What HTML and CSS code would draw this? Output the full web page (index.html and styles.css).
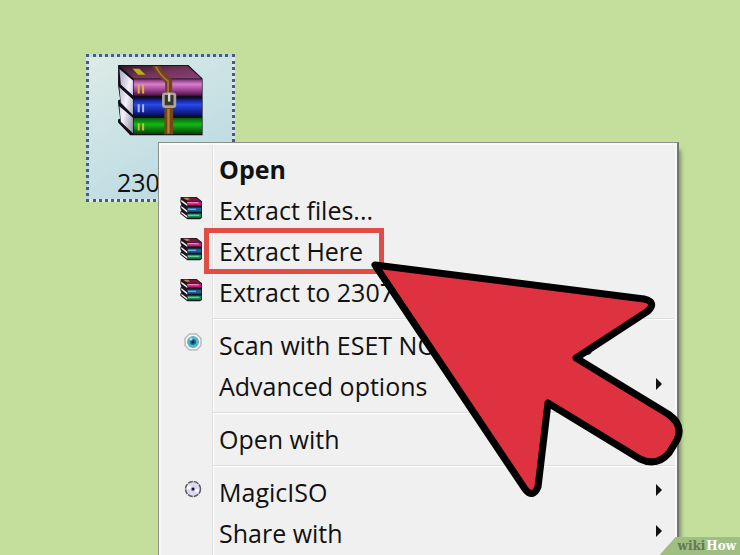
FILE: index.html
```html
<!DOCTYPE html>
<html lang="en">
<head>
<meta charset="utf-8">
<title>Extract Here</title>
<link rel="stylesheet" href="styles.css">
</head>
<body>
<svg class="defs" aria-hidden="true">
  <defs>
    <linearGradient id="plum" x1="0" y1="0" x2="0" y2="1"><stop offset="0" stop-color="#7a2c6e"/><stop offset=".3" stop-color="#d77fce"/><stop offset=".6" stop-color="#a84a9c"/><stop offset="1" stop-color="#4a123f"/></linearGradient>
    <linearGradient id="cover" x1="0" y1="0" x2="1" y2="1"><stop offset="0" stop-color="#2f1528"/><stop offset=".5" stop-color="#713459"/><stop offset="1" stop-color="#8b3f7a"/></linearGradient>
    <linearGradient id="blue" x1="0" y1="0" x2="0" y2="1"><stop offset="0" stop-color="#0a1378"/><stop offset=".35" stop-color="#2848ea"/><stop offset="1" stop-color="#060c62"/></linearGradient>
    <linearGradient id="green" x1="0" y1="0" x2="0" y2="1"><stop offset="0" stop-color="#05620a"/><stop offset=".4" stop-color="#15b51a"/><stop offset="1" stop-color="#024305"/></linearGradient>
    <linearGradient id="pages" x1="0" y1="0" x2="1" y2="1"><stop offset="0" stop-color="#a8a4bd"/><stop offset=".5" stop-color="#f3f1fa"/><stop offset="1" stop-color="#8f8ba6"/></linearGradient>
    <symbol id="books" viewBox="0 0 66 72">
      <path d="M2 3H50L66 16V66L60 70H22L1 53V47L4 44 1 36V30L4 26 1 18Z" fill="#1b141b"/>
      <path d="M4 11 22 25V30L4 17ZM4 30 22 44V50L4 35ZM4 47 22 60V66L4 52Z" fill="#f1f1f6"/>
      <path d="M6 5H48L62 15H23Z" fill="#74163f"/>
      <path d="M10 5H24L30 10 20 12Z" fill="#c98535"/>
      <path d="M22 17H64V28H22Z" fill="#c01c78"/>
      <path d="M22 20H56" stroke="#ec86ba" stroke-width="4"/>
      <path d="M22 35H64V47H22Z" fill="#17609d"/>
      <path d="M24 40H48" stroke="#65b7e3" stroke-width="4"/>
      <path d="M22 53H64V65H22Z" fill="#168a58"/>
      <path d="M24 58H58" stroke="#61cf97" stroke-width="4"/>
    </symbol>
  </defs>
</svg>
<main class="desktop">
  <button class="file" type="button">
    <svg class="archive" viewBox="0 0 252 210" aria-hidden="true">
      <path d="M2 0H210L252 40V208H38L2 170V161L8 158 2 114V104L8 102 2 60Z" fill="#120d16"/>
      <path d="M6 12 46 46V90L10 58ZM6 66 46 102V148L10 112ZM6 122 46 156V202L10 168Z" fill="url(#pages)"/>
      <path d="M5 2H207L248 40H48Z" fill="url(#cover)"/>
      <path d="M48 42H250V91H48Z" fill="url(#plum)"/>
      <path d="M48 99H250V150H48Z" fill="url(#blue)"/>
      <path d="M48 157H250V204H48Z" fill="url(#green)"/>
      <path d="M45 11H65L83 29H61Z" fill="#b8ad16"/>
      <path d="M63 58V84M76 58V84M63 172V194M76 172V194" stroke="#d8b62c" stroke-width="6"/>
      <path d="M63 116V140M76 116V140" stroke="#a9b5dc" stroke-width="6"/>
      <path d="M103 3H126Q138 28 162 43V90H141V52Q118 34 103 3Z" fill="#70431f"/>
      <path d="M114 5Q126 30 150 48V86" fill="none" stroke="#a9743d" stroke-width="5"/>
      <path d="M139 126H165V205H139Z" fill="#754717"/>
      <path d="M151 130V202" stroke="#b57d35" stroke-width="7"/>
      <rect x="136" y="85" width="34" height="38" rx="5" fill="#39352f" stroke="#aaa69f" stroke-width="8"/>
      <path d="M153 84V108" stroke="#d8d4ce" stroke-width="7"/>
    </svg>
    <span class="name">2307</span>
  </button>

  <nav class="menu" aria-label="File actions">
    <button class="item default" type="button"><span class="icon"></span><span>Open</span></button>
    <button class="item" type="button"><span class="icon"><svg class="rar"><use href="#books"/></svg></span><span>Extract files...</span></button>
    <button class="item marked" type="button"><span class="icon"><svg class="rar"><use href="#books"/></svg></span><span>Extract Here</span></button>
    <button class="item" type="button"><span class="icon"><svg class="rar"><use href="#books"/></svg></span><span>Extract to 2307\</span></button>
    <hr>
    <button class="item" type="button"><span class="icon"><svg class="round" viewBox="0 0 18 18"><path d="M5.500 1H12.500L17 5.500V12.500L12.500 17H5.500L1 12.500V5.500Z" fill="#fafafa" stroke="#bdb9bb" stroke-width="1.500"/><circle cx="9" cy="9" r="6" fill="#55b5c2"/><circle cx="9" cy="9" r="3" fill="#16709a"/><circle cx="9" cy="9" r="1.500" fill="#092c50"/><circle cx="7" cy="6" r="1.500" fill="#a7dfe4"/></svg></span><span>Scan with ESET NOD32 Antivirus</span></button>
    <button class="item sub" type="button"><span class="icon"></span><span>Advanced options</span></button>
    <hr>
    <button class="item" type="button"><span class="icon"></span><span>Open with</span></button>
    <hr>
    <button class="item sub" type="button"><span class="icon"><svg class="round" viewBox="0 0 18 18"><circle cx="9" cy="9" r="7.500" fill="#dcdaf0" stroke="#5d5b66" stroke-width="1.500" stroke-dasharray="5 1"/><path d="M3 7 7 8M11 10 15 11" stroke="#fff" stroke-width="3"/><circle cx="9" cy="9" r="2.500" fill="#c5c2df"/><circle cx="9" cy="9" r="1.500" fill="#17151f"/></svg></span><span>MagicISO</span></button>
    <button class="item sub" type="button"><span class="icon"></span><span>Share with</span></button>
  </nav>

  <svg class="pointer" viewBox="370 260 314 240" aria-hidden="true">
    <path d="M375 265 644 299Q657 302 648 311L576 358 668 414Q684 425 677 440L669 453Q657 467 640 459L548 403 538 487Q533 499 525 489Z" fill="#df3240" stroke="#000" stroke-width="7" stroke-linejoin="round"/>
  </svg>
  <div class="watermark"><span>wiki</span><b>How</b></div>
</main>
</body>
</html>
```
FILE: styles.css
```css
*,
*::after {
  box-sizing: border-box;
}

body {
  margin: 0;
  background: #c4df9b;
  color: #111;
  font: 25px/41px "Open Sans", "Noto Sans", sans-serif;
}

button {
  margin: 0;
  padding: 0;
  border: 0;
  background: none;
  color: inherit;
  font: inherit;
  text-align: left;
}

.defs {
  position: absolute;
  width: 0;
  height: 0;
}

.desktop {
  position: relative;
  height: 100vh;
  overflow: hidden;
}

.file {
  position: absolute;
  left: 86px;
  top: 54px;
  display: flex;
  flex-direction: column;
  gap: 29px;
  width: 149px;
  padding: 8px 28px 0;
  border: 3px dotted #4c5c78;
  background: linear-gradient(150deg, #dcebe6, #c4dfe4 60%, #b7d8e1);
  line-height: 34px;
}

.archive {
  width: 86px;
  height: 71px;
}

.menu {
  position: absolute;
  left: 158px;
  top: 142px;
  width: 521px;
  padding: 6px 3px;
  border: 1px solid #8b918b;
  border-right: 2px solid #70786b;
  background: linear-gradient(90deg, #f0f0f0 53px, #dedede 53px, #dedede 54px, #fff 54px, #fff 55px, #f0f0f0 55px);
  box-shadow: inset 0 0 0 2px #f8f8f8, 4px 6px 4px -2px #7e9067;
}

.item {
  position: relative;
  display: flex;
  align-items: center;
  width: 100%;
  height: 41px;
  white-space: nowrap;
}

.icon {
  display: flex;
  justify-content: flex-end;
  flex: none;
  width: 57px;
  padding-right: 17px;
}

.rar {
  width: 22px;
  height: 24px;
  margin-bottom: 6px;
}

.round {
  width: 18px;
  height: 18px;
  margin-bottom: 8px;
}

.default {
  font-weight: 700;
}

.marked::after {
  content: "";
  position: absolute;
  left: 42px;
  top: -3px;
  width: 180px;
  height: 46px;
  border: 5px solid #e04d46;
}

.sub::after {
  content: "";
  margin: 0 12px 6px auto;
  border: solid transparent;
  border-width: 6px 0 6px 6px;
  border-left-color: #111;
}

hr {
  height: 2px;
  margin: 5px 0 5px 51px;
  border: 0;
  border-top: 1px solid #dedede;
  border-bottom: 1px solid #fff;
}

.pointer {
  position: absolute;
  left: 370px;
  top: 260px;
  width: 314px;
  height: 240px;
}

.watermark {
  position: absolute;
  right: 0;
  bottom: 0;
  display: flex;
  gap: 1px;
  padding: 0 4px 0 18px;
  background: #9fbe82;
  clip-path: polygon(16px 0, 100% 0, 100% 100%, 0 100%);
  color: #667751;
  font: 700 12px/18px "DejaVu Serif", serif;
}

.watermark b {
  color: #fff;
}
```
